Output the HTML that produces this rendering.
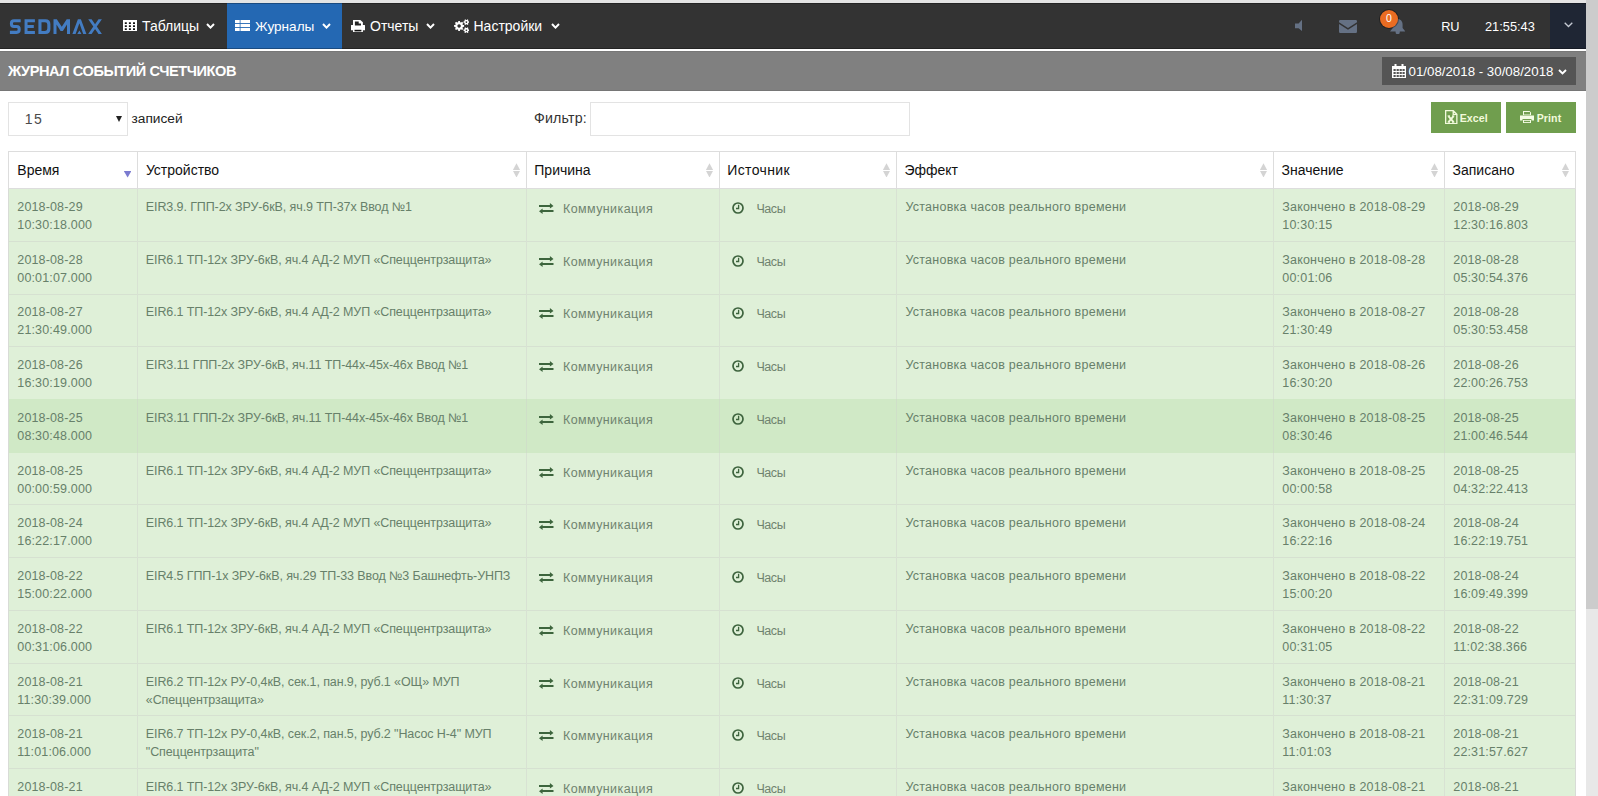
<!DOCTYPE html>
<html><head><meta charset="utf-8">
<style>
*{box-sizing:border-box;margin:0;padding:0}
html,body{width:1598px;height:796px;overflow:hidden;background:#fff;font-family:"Liberation Sans",sans-serif}
#top{position:absolute;left:0;top:0;width:1586px;height:3px;background:#e4e4e4}
#nav{position:absolute;left:0;top:3px;width:1586px;height:46px;background:#333;color:#fff}
.shl{position:absolute;left:0;width:1586px;height:1px;background:rgba(0,0,0,0.28)}
#nav .nt{position:absolute;top:0;height:46px;font-size:14px;line-height:47.6px;white-space:nowrap}
.ni{position:absolute}
#nav .act{background:#2468b3}
.chev{position:absolute;width:6px;height:6px;border-right:1.6px solid #fff;border-bottom:1.6px solid #fff;transform:rotate(45deg)}
#wline{position:absolute;left:0;top:49px;width:1586px;height:2px;background:#fff}
#hdr{position:absolute;left:0;top:51px;width:1586px;height:40px;background:#808080;box-shadow:inset 0 1px 0 #777,inset 0 -1px 0 #767676}
#hdr .ttl{position:absolute;left:8px;top:0;line-height:40px;font-size:14.6px;letter-spacing:-0.45px;font-weight:bold;color:#fff;white-space:nowrap}
#date{position:absolute;overflow:hidden;left:1382px;top:6px;width:194px;height:27.7px;background:#555;color:#fff;font-size:13.3px;line-height:29px;white-space:nowrap}
#sb{position:absolute;left:1586px;top:0;width:12px;height:796px;background:#e8e8e8}
#sbt{position:absolute;left:1586px;top:0;width:12px;height:608.7px;background:#cccccc}
#sel{position:absolute;left:8px;top:102.3px;width:120px;height:33.4px;border:1px solid #e3e3e3;background:#fff}
#sel .v{position:absolute;left:15.8px;top:1px;line-height:31.4px;font-size:14px;color:#4a4a4a;letter-spacing:1.3px}
#sel .ar{position:absolute;left:106.6px;top:13px;width:0;height:0;border-left:3px solid transparent;border-right:3px solid transparent;border-top:6px solid #222}
.lbl{position:absolute;font-size:13.7px;color:#444;white-space:nowrap}
#flt{position:absolute;left:590px;top:102px;width:320px;height:33.5px;border:1px solid #e3e3e3;background:#fff}
.btn{position:absolute;top:102.2px;height:30.6px;width:69.7px;background:#709e4e;color:#f2fadc;font-size:10.6px;font-weight:bold;letter-spacing:0.1px;line-height:32px;white-space:nowrap}
.bg{position:absolute}
.rw{background:#dff0d8}
.hv{background:#d0e9c6}
.ht{position:absolute;top:152px;line-height:37px;font-size:14px;color:#111;white-space:nowrap}
.sd{position:absolute;top:171px;width:7.6px;height:6.6px;background:#7b7bd0;clip-path:polygon(0 0,100% 0,50% 100%)}
.su{position:absolute;top:163.2px;width:7.2px;height:6.7px;background:#d4d4d4;clip-path:polygon(50% 0,100% 100%,0 100%)}
.sn{position:absolute;top:170.7px;width:7.2px;height:6.7px;background:#d4d4d4;clip-path:polygon(0 0,100% 0,50% 100%)}
.tx{position:absolute;font-size:12.5px;line-height:18px;color:#67806a;white-space:nowrap}
.t2{color:#6f836f;letter-spacing:0.4px}
.t3{color:#6f836f;letter-spacing:-0.4px}
.ic{position:absolute}
.ln{position:absolute;width:1px;height:1px}
.hl{background:#dddddd}
.hv1{background:#dddddd;width:1px}
.rl{background:#d6e1d1}
.vl{background:#d8e2d3}
.vl.vh{background:#cfdfc8}
.vl0{background:#d8dcd6}

</style></head><body>
<div id="top"></div>
<div id="nav">
  <svg class="ni" style="left:0;top:0" width="110" height="45" viewBox="0 3 110 45"><g fill="none" stroke="#437cc2"><path stroke-width="3.1" d="M20.7 20.75H14Q11.45 20.75 11.45 23.2V24Q11.45 26.5 14 26.5H16.6Q19.15 26.5 19.15 29V29.85Q19.15 32.35 16.6 32.35H9.9"/><path stroke-width="3" stroke-linejoin="miter" d="M34.9 20.7H26.05V32.4H34.9M26.05 26.5H33.8"/></g><g fill="#437cc2" fill-rule="evenodd"><path d="M38.4 19.2H45.4Q50.4 19.2 50.4 24.2V28.9Q50.4 33.9 45.4 33.9H38.4Z M41.5 22.2H45Q47.3 22.2 47.3 24.5V28.6Q47.3 30.9 45 30.9H41.5Z"/><path d="M53.5 33.9V19.2H56.8L61.75 26.8 66.7 19.2H70V33.9H67V24.6L62.9 30.9H60.6L56.5 24.6V33.9Z"/><path d="M72.4 33.9L77.9 19.2H80.9L86.4 33.9H83.2L79.4 23.2 75.6 33.9Z M77.3 33.9L79.4 30.4 81.5 33.9Z"/><path d="M88.2 19.2H91.6L95.05 24.2 98.5 19.2H101.9L96.8 26.55 101.9 33.9H98.5L95.05 28.9 91.6 33.9H88.2L93.3 26.55Z"/></g></svg>
  <svg class="ni" style="left:123.1px;top:16.9px" width="14" height="11.1" viewBox="0 0 14 11.1"><rect width="14" height="11.1" fill="#fff"/><g fill="#111"><rect x="1.8" y="2.3" width="2" height="1.7"/><rect x="5.9" y="2.3" width="2" height="1.7"/><rect x="10" y="2.3" width="2" height="1.7"/><rect x="1.8" y="5.3" width="2" height="1.7"/><rect x="5.9" y="5.3" width="2" height="1.7"/><rect x="10" y="5.3" width="2" height="1.7"/><rect x="1.8" y="8.3" width="2" height="1.7"/><rect x="5.9" y="8.3" width="2" height="1.7"/><rect x="10" y="8.3" width="2" height="1.7"/></g></svg>
  <span class="nt" style="left:142px">Таблицы</span>
  <svg class="ni" style="left:206.3px;top:20.3px" width="9" height="6" viewBox="0 0 9 6"><polyline points="1,1 4.5,4.6 8,1" fill="none" stroke="#fff" stroke-width="2"/></svg>
  <div class="act" style="position:absolute;left:227px;top:0;width:115px;height:46px"></div>
  <svg class="ni" style="left:235px;top:16.9px" width="15" height="11.1" viewBox="0 0 15 11.1"><g fill="#fff"><rect x="0" y="0" width="4.7" height="3.1"/><rect x="5.5" y="0" width="9.5" height="3.1"/><rect x="0" y="4" width="4.7" height="3.1"/><rect x="5.5" y="4" width="9.5" height="3.1"/><rect x="0" y="8" width="4.7" height="3.1"/><rect x="5.5" y="8" width="9.5" height="3.1"/></g></svg>
  <span class="nt" style="left:255px;font-size:13.6px">Журналы</span>
  <svg class="ni" style="left:322px;top:20.3px" width="9" height="6" viewBox="0 0 9 6"><polyline points="1,1 4.5,4.6 8,1" fill="none" stroke="#fff" stroke-width="2"/></svg>
  <svg class="ni" style="left:351px;top:16.9px" width="14" height="12.1" viewBox="0 0 14 12.1"><path d="M2 .3Q2 0 2.3 0H9.3L11.9 2.2V5.6H2z M0 5.3Q0 5 .5 5H13.5Q14 5 14 5.3V10.2H11.9V8.7H2V10.2H0z M2 8.7H11.9V12.1H2z" fill="#fff"/><path d="M3.9 1.5H7.7V3.4H10V5.4H3.9z" fill="#222"/><rect x="3.5" y="9.8" width="6.9" height="1.6" fill="#111"/></svg>
  <span class="nt" style="left:370px">Отчеты</span>
  <svg class="ni" style="left:425.8px;top:20.3px" width="9" height="6" viewBox="0 0 9 6"><polyline points="1,1 4.5,4.6 8,1" fill="none" stroke="#fff" stroke-width="2"/></svg>
  <svg class="ni" style="left:453.9px;top:15.9px" width="15.4" height="14.3" viewBox="0 0 15.4 14.3"><path fill="#fff" fill-rule="evenodd" d="M8.87 5.95 L10.13 6.11 L10.13 7.79 L8.87 7.95 L8.47 8.91 L9.25 9.92 L8.07 11.10 L7.06 10.32 L6.10 10.72 L5.94 11.98 L4.26 11.98 L4.10 10.72 L3.14 10.32 L2.13 11.10 L0.95 9.92 L1.73 8.91 L1.33 7.95 L0.07 7.79 L0.07 6.11 L1.33 5.95 L1.73 4.99 L0.95 3.98 L2.13 2.80 L3.14 3.58 L4.10 3.18 L4.26 1.92 L5.94 1.92 L6.10 3.18 L7.06 3.58 L8.07 2.80 L9.25 3.98 L8.47 4.99Z M5.1 5.2a1.75 1.75 0 1 0 0.01 0z"/><path fill="#fff" fill-rule="evenodd" d="M14.47 2.35 L15.33 2.45 L15.33 3.75 L14.47 3.85 L14.08 4.52 L14.43 5.31 L13.30 5.96 L12.79 5.27 L12.01 5.27 L11.50 5.96 L10.37 5.31 L10.72 4.52 L10.33 3.85 L9.47 3.75 L9.47 2.45 L10.33 2.35 L10.72 1.68 L10.37 0.89 L11.50 0.24 L12.01 0.93 L12.79 0.93 L13.30 0.24 L14.43 0.89 L14.08 1.68Z M12.4 2.3a.8 .8 0 1 0 .01 0z"/><path fill="#fff" fill-rule="evenodd" d="M14.47 10.45 L15.33 10.55 L15.33 11.85 L14.47 11.95 L14.08 12.62 L14.43 13.41 L13.30 14.06 L12.79 13.37 L12.01 13.37 L11.50 14.06 L10.37 13.41 L10.72 12.62 L10.33 11.95 L9.47 11.85 L9.47 10.55 L10.33 10.45 L10.72 9.78 L10.37 8.99 L11.50 8.34 L12.01 9.03 L12.79 9.03 L13.30 8.34 L14.43 8.99 L14.08 9.78Z M12.4 10.4a.8 .8 0 1 0 .01 0z"/></svg>
  <span class="nt" style="left:473.5px">Настройки</span>
  <svg class="ni" style="left:550.8px;top:20.3px" width="9" height="6" viewBox="0 0 9 6"><polyline points="1,1 4.5,4.6 8,1" fill="none" stroke="#fff" stroke-width="2"/></svg>
  <!-- right side -->
  <svg class="ni" style="left:1294.8px;top:15.6px" width="7.6" height="12.4" viewBox="0 0 7.6 12.4"><path d="M0 4.4H3.6L7.6 0V12.4L3.6 9.2H0z" fill="#657184"/></svg>
  <svg class="ni" style="left:1339px;top:16.9px" width="18" height="12.9" viewBox="0 0 18 12.9"><path d="M0 1.2A1.2 1.2 0 0 1 1.2 0h15.6A1.2 1.2 0 0 1 18 1.2v1L9 7.9 0 2.2z M0 4.1l9 5.7 9-5.7V11.7A1.2 1.2 0 0 1 16.8 12.9H1.2A1.2 1.2 0 0 1 0 11.7z" fill="#657184"/></svg>
  <svg class="ni" style="left:1389.8px;top:15.5px" width="15.4" height="15.2" viewBox="0 0 15.4 15.2"><path d="M7.7 0C10.6 0 12.6 2.4 12.6 5.5V8.9L15.4 12.6H0L2.8 8.9V5.5C2.8 2.4 4.8 0 7.7 0z M5.6 12.6H9.8V13.2A2.1 2 0 0 1 5.6 13.2z" fill="#657184"/></svg>
  <div style="position:absolute;left:1379.8px;top:6.6px;width:18.4px;height:18.4px;border-radius:50%;background:#ea6c22;box-shadow:0 0 0 1px rgba(0,0,0,0.35);color:#fff;font-size:10.5px;line-height:17.5px;text-align:center">0</div>
  <span class="nt" style="left:1441.3px;font-size:12.8px;letter-spacing:-0.4px">RU</span>
  <span class="nt" style="left:1485px;font-size:12.8px">21:55:43</span>
  <div style="position:absolute;left:1550px;top:0;width:36px;height:46px;background:#1f2634"></div>
  <div class="shl" style="top:0"></div><div class="shl" style="top:45px"></div>
  <svg class="ni" style="left:1563.6px;top:19.3px" width="9" height="5.5" viewBox="0 0 9 5.5"><polyline points="0.7,0.7 4.5,4.5 8.3,0.7" fill="none" stroke="#c4c9d2" stroke-width="1.3"/></svg>
</div>
<div id="wline"></div>
<div id="hdr">
  <div class="ttl">ЖУРНАЛ СОБЫТИЙ СЧЕТЧИКОВ</div>
  <div id="date">
    <svg style="position:absolute;left:10px;top:7px" width="14" height="14" viewBox="0 0 14 14"><path d="M0 2h14v12H0z" fill="#fff"/><g fill="#555"><rect x="1.5" y="5" width="2.2" height="2"/><rect x="4.6" y="5" width="2.2" height="2"/><rect x="7.6" y="5" width="2.2" height="2"/><rect x="10.5" y="5" width="2.2" height="2"/><rect x="1.5" y="8" width="2.2" height="2"/><rect x="4.6" y="8" width="2.2" height="2"/><rect x="7.6" y="8" width="2.2" height="2"/><rect x="10.5" y="8" width="2.2" height="2"/><rect x="1.5" y="11" width="2.2" height="2"/><rect x="4.6" y="11" width="2.2" height="2"/><rect x="7.6" y="11" width="2.2" height="2"/><rect x="10.5" y="11" width="2.2" height="2"/></g><rect x="2.5" y="0" width="2" height="3.5" fill="#fff"/><rect x="9.5" y="0" width="2" height="3.5" fill="#fff"/></svg>
    <span style="position:absolute;left:26.5px">01/08/2018 - 30/08/2018</span>
    <svg class="ni" style="left:175.5px;top:12px" width="9" height="6" viewBox="0 0 9 6"><polyline points="1,1 4.5,4.5 8,1" fill="none" stroke="#fff" stroke-width="1.9"/></svg>
  </div>
</div>
<div id="sb"></div><div id="sbt"></div>

<div id="sel"><span class="v">15</span><i class="ar"></i></div>
<div class="lbl" style="left:131.5px;top:111px;color:#222">записей</div>
<div class="lbl" style="left:534px;top:110px;font-size:14.2px;letter-spacing:0.2px;color:#333">Фильтр:</div>
<div id="flt"></div>
<div class="btn" style="left:1431.2px">
  <svg style="position:absolute;left:13.4px;top:7.8px" width="13" height="14.5" viewBox="0 0 13 14.5"><path d="M.65 .65H8.2L11.85 4.3V13.55H.65Z M8.2 .65V4.3H11.85" fill="none" stroke="#f2fadc" stroke-width="1.3" stroke-linejoin="miter"/><path d="M3.4 6.1L8.6 12.1M8.6 6.1L3.4 12.1" stroke="#f2fadc" stroke-width="1.9"/><path d="M2.6 5.9H5M7 5.9H9.4M2.6 12.2H5M7 12.2H9.4" stroke="#f2fadc" stroke-width="1"/></svg>
  <span style="position:absolute;left:28.5px">Excel</span>
</div>
<div class="btn" style="left:1506.2px">
  <svg style="position:absolute;left:14px;top:9px" width="14" height="12" viewBox="0 0 14 12"><path d="M3 0h6.5L11 1.5V4H3z M0 4.5h14V9.5h-2.5V8h-9v1.5H0z M3 9h8v3H3z" fill="#f4fbe4"/><rect x="4" y="1" width="6" height="2.5" fill="#74a052"/><rect x="4" y="9.8" width="6" height="1.3" fill="#74a052"/></svg>
  <span style="position:absolute;left:30.5px">Print</span>
</div>

<div class="bg" style="left:8px;top:151px;width:1568px;height:38px;background:#fff"></div>
<span class="ht" style="left:17.3px">Время</span>
<i class="sd" style="left:123.8px"></i>
<span class="ht" style="left:145.9px">Устройство</span>
<i class="su" style="left:512.9px"></i><i class="sn" style="left:512.9px"></i>
<span class="ht" style="left:534.3px">Причина</span>
<i class="su" style="left:705.9px"></i><i class="sn" style="left:705.9px"></i>
<span class="ht" style="left:727.3px;letter-spacing:0.35px">Источник</span>
<i class="su" style="left:882.9px"></i><i class="sn" style="left:882.9px"></i>
<span class="ht" style="left:904.4px">Эффект</span>
<i class="su" style="left:1259.9px"></i><i class="sn" style="left:1259.9px"></i>
<span class="ht" style="left:1281.5px">Значение</span>
<i class="su" style="left:1430.9px"></i><i class="sn" style="left:1430.9px"></i>
<span class="ht" style="left:1452.5px">Записано</span>
<i class="su" style="left:1561.9px"></i><i class="sn" style="left:1561.9px"></i>
<div class="bg rw" style="left:9px;top:189px;width:1566px;height:52px"></div>
<div class="tx" style="left:17.3px;top:198px;letter-spacing:0.15px">2018-08-29<br>10:30:18.000</div>
<div class="tx" style="left:145.8px;top:198px;letter-spacing:-0.1px">EIR3.9. ГПП-2х ЗРУ-6кВ, яч.9 ТП-37х Ввод №1</div>
<div class="tx" style="left:905.4px;top:198px;letter-spacing:0.25px">Установка часов реального времени</div>
<div class="tx" style="left:1282.3px;top:198px;letter-spacing:0.19px">Закончено в 2018-08-29<br>10:30:15</div>
<div class="tx" style="left:1453.3px;top:198px;letter-spacing:0.15px">2018-08-29<br>12:30:16.803</div>
<svg class="ic" style="left:539px;top:203.1px" width="14.5" height="11" viewBox="0 0 14.5 11"><path d="M0 2.1h10.9V0L14.5 2.9 10.9 5.6V4H0z M14.5 7.1H3.6V5.4L0 8.2 3.6 11V9H14.5z" fill="#3d653d"/></svg>
<div class="tx t2" style="left:563px;top:200px">Коммуникация</div>
<svg class="ic" style="left:731.8px;top:202px" width="12" height="12" viewBox="0 0 12 12"><circle cx="6" cy="6" r="5" fill="none" stroke="#3d633d" stroke-width="1.7"/><path d="M6.6 2.8v3.7H4" fill="none" stroke="#3d633d" stroke-width="1.3"/></svg>
<div class="tx t3" style="left:756.4px;top:200px">Часы</div>
<div class="bg rw" style="left:9px;top:242px;width:1566px;height:52px"></div>
<div class="tx" style="left:17.3px;top:251px;letter-spacing:0.15px">2018-08-28<br>00:01:07.000</div>
<div class="tx" style="left:145.8px;top:251px;letter-spacing:-0.1px">EIR6.1 ТП-12х ЗРУ-6кВ, яч.4 АД-2 МУП «Спеццентрзащита»</div>
<div class="tx" style="left:905.4px;top:251px;letter-spacing:0.25px">Установка часов реального времени</div>
<div class="tx" style="left:1282.3px;top:251px;letter-spacing:0.19px">Закончено в 2018-08-28<br>00:01:06</div>
<div class="tx" style="left:1453.3px;top:251px;letter-spacing:0.15px">2018-08-28<br>05:30:54.376</div>
<svg class="ic" style="left:539px;top:256.1px" width="14.5" height="11" viewBox="0 0 14.5 11"><path d="M0 2.1h10.9V0L14.5 2.9 10.9 5.6V4H0z M14.5 7.1H3.6V5.4L0 8.2 3.6 11V9H14.5z" fill="#3d653d"/></svg>
<div class="tx t2" style="left:563px;top:253px">Коммуникация</div>
<svg class="ic" style="left:731.8px;top:255px" width="12" height="12" viewBox="0 0 12 12"><circle cx="6" cy="6" r="5" fill="none" stroke="#3d633d" stroke-width="1.7"/><path d="M6.6 2.8v3.7H4" fill="none" stroke="#3d633d" stroke-width="1.3"/></svg>
<div class="tx t3" style="left:756.4px;top:253px">Часы</div>
<div class="bg rw" style="left:9px;top:295px;width:1566px;height:51px"></div>
<div class="tx" style="left:17.3px;top:303px;letter-spacing:0.15px">2018-08-27<br>21:30:49.000</div>
<div class="tx" style="left:145.8px;top:303px;letter-spacing:-0.1px">EIR6.1 ТП-12х ЗРУ-6кВ, яч.4 АД-2 МУП «Спеццентрзащита»</div>
<div class="tx" style="left:905.4px;top:303px;letter-spacing:0.25px">Установка часов реального времени</div>
<div class="tx" style="left:1282.3px;top:303px;letter-spacing:0.19px">Закончено в 2018-08-27<br>21:30:49</div>
<div class="tx" style="left:1453.3px;top:303px;letter-spacing:0.15px">2018-08-28<br>05:30:53.458</div>
<svg class="ic" style="left:539px;top:308.1px" width="14.5" height="11" viewBox="0 0 14.5 11"><path d="M0 2.1h10.9V0L14.5 2.9 10.9 5.6V4H0z M14.5 7.1H3.6V5.4L0 8.2 3.6 11V9H14.5z" fill="#3d653d"/></svg>
<div class="tx t2" style="left:563px;top:305px">Коммуникация</div>
<svg class="ic" style="left:731.8px;top:307px" width="12" height="12" viewBox="0 0 12 12"><circle cx="6" cy="6" r="5" fill="none" stroke="#3d633d" stroke-width="1.7"/><path d="M6.6 2.8v3.7H4" fill="none" stroke="#3d633d" stroke-width="1.3"/></svg>
<div class="tx t3" style="left:756.4px;top:305px">Часы</div>
<div class="bg rw" style="left:9px;top:347px;width:1566px;height:52px"></div>
<div class="tx" style="left:17.3px;top:356px;letter-spacing:0.15px">2018-08-26<br>16:30:19.000</div>
<div class="tx" style="left:145.8px;top:356px;letter-spacing:-0.1px">EIR3.11 ГПП-2х ЗРУ-6кВ, яч.11 ТП-44х-45х-46х Ввод №1</div>
<div class="tx" style="left:905.4px;top:356px;letter-spacing:0.25px">Установка часов реального времени</div>
<div class="tx" style="left:1282.3px;top:356px;letter-spacing:0.19px">Закончено в 2018-08-26<br>16:30:20</div>
<div class="tx" style="left:1453.3px;top:356px;letter-spacing:0.15px">2018-08-26<br>22:00:26.753</div>
<svg class="ic" style="left:539px;top:361.1px" width="14.5" height="11" viewBox="0 0 14.5 11"><path d="M0 2.1h10.9V0L14.5 2.9 10.9 5.6V4H0z M14.5 7.1H3.6V5.4L0 8.2 3.6 11V9H14.5z" fill="#3d653d"/></svg>
<div class="tx t2" style="left:563px;top:358px">Коммуникация</div>
<svg class="ic" style="left:731.8px;top:360px" width="12" height="12" viewBox="0 0 12 12"><circle cx="6" cy="6" r="5" fill="none" stroke="#3d633d" stroke-width="1.7"/><path d="M6.6 2.8v3.7H4" fill="none" stroke="#3d633d" stroke-width="1.3"/></svg>
<div class="tx t3" style="left:756.4px;top:358px">Часы</div>
<div class="bg hv" style="left:9px;top:399px;width:1566px;height:54px"></div>
<div class="tx" style="left:17.3px;top:409px;letter-spacing:0.15px">2018-08-25<br>08:30:48.000</div>
<div class="tx" style="left:145.8px;top:409px;letter-spacing:-0.1px">EIR3.11 ГПП-2х ЗРУ-6кВ, яч.11 ТП-44х-45х-46х Ввод №1</div>
<div class="tx" style="left:905.4px;top:409px;letter-spacing:0.25px">Установка часов реального времени</div>
<div class="tx" style="left:1282.3px;top:409px;letter-spacing:0.19px">Закончено в 2018-08-25<br>08:30:46</div>
<div class="tx" style="left:1453.3px;top:409px;letter-spacing:0.15px">2018-08-25<br>21:00:46.544</div>
<svg class="ic" style="left:539px;top:414.1px" width="14.5" height="11" viewBox="0 0 14.5 11"><path d="M0 2.1h10.9V0L14.5 2.9 10.9 5.6V4H0z M14.5 7.1H3.6V5.4L0 8.2 3.6 11V9H14.5z" fill="#3d653d"/></svg>
<div class="tx t2" style="left:563px;top:411px">Коммуникация</div>
<svg class="ic" style="left:731.8px;top:413px" width="12" height="12" viewBox="0 0 12 12"><circle cx="6" cy="6" r="5" fill="none" stroke="#3d633d" stroke-width="1.7"/><path d="M6.6 2.8v3.7H4" fill="none" stroke="#3d633d" stroke-width="1.3"/></svg>
<div class="tx t3" style="left:756.4px;top:411px">Часы</div>
<div class="bg rw" style="left:9px;top:453px;width:1566px;height:51px"></div>
<div class="tx" style="left:17.3px;top:462px;letter-spacing:0.15px">2018-08-25<br>00:00:59.000</div>
<div class="tx" style="left:145.8px;top:462px;letter-spacing:-0.1px">EIR6.1 ТП-12х ЗРУ-6кВ, яч.4 АД-2 МУП «Спеццентрзащита»</div>
<div class="tx" style="left:905.4px;top:462px;letter-spacing:0.25px">Установка часов реального времени</div>
<div class="tx" style="left:1282.3px;top:462px;letter-spacing:0.19px">Закончено в 2018-08-25<br>00:00:58</div>
<div class="tx" style="left:1453.3px;top:462px;letter-spacing:0.15px">2018-08-25<br>04:32:22.413</div>
<svg class="ic" style="left:539px;top:467.1px" width="14.5" height="11" viewBox="0 0 14.5 11"><path d="M0 2.1h10.9V0L14.5 2.9 10.9 5.6V4H0z M14.5 7.1H3.6V5.4L0 8.2 3.6 11V9H14.5z" fill="#3d653d"/></svg>
<div class="tx t2" style="left:563px;top:464px">Коммуникация</div>
<svg class="ic" style="left:731.8px;top:466px" width="12" height="12" viewBox="0 0 12 12"><circle cx="6" cy="6" r="5" fill="none" stroke="#3d633d" stroke-width="1.7"/><path d="M6.6 2.8v3.7H4" fill="none" stroke="#3d633d" stroke-width="1.3"/></svg>
<div class="tx t3" style="left:756.4px;top:464px">Часы</div>
<div class="bg rw" style="left:9px;top:505px;width:1566px;height:52px"></div>
<div class="tx" style="left:17.3px;top:514px;letter-spacing:0.15px">2018-08-24<br>16:22:17.000</div>
<div class="tx" style="left:145.8px;top:514px;letter-spacing:-0.1px">EIR6.1 ТП-12х ЗРУ-6кВ, яч.4 АД-2 МУП «Спеццентрзащита»</div>
<div class="tx" style="left:905.4px;top:514px;letter-spacing:0.25px">Установка часов реального времени</div>
<div class="tx" style="left:1282.3px;top:514px;letter-spacing:0.19px">Закончено в 2018-08-24<br>16:22:16</div>
<div class="tx" style="left:1453.3px;top:514px;letter-spacing:0.15px">2018-08-24<br>16:22:19.751</div>
<svg class="ic" style="left:539px;top:519.1px" width="14.5" height="11" viewBox="0 0 14.5 11"><path d="M0 2.1h10.9V0L14.5 2.9 10.9 5.6V4H0z M14.5 7.1H3.6V5.4L0 8.2 3.6 11V9H14.5z" fill="#3d653d"/></svg>
<div class="tx t2" style="left:563px;top:516px">Коммуникация</div>
<svg class="ic" style="left:731.8px;top:518px" width="12" height="12" viewBox="0 0 12 12"><circle cx="6" cy="6" r="5" fill="none" stroke="#3d633d" stroke-width="1.7"/><path d="M6.6 2.8v3.7H4" fill="none" stroke="#3d633d" stroke-width="1.3"/></svg>
<div class="tx t3" style="left:756.4px;top:516px">Часы</div>
<div class="bg rw" style="left:9px;top:558px;width:1566px;height:52px"></div>
<div class="tx" style="left:17.3px;top:567px;letter-spacing:0.15px">2018-08-22<br>15:00:22.000</div>
<div class="tx" style="left:145.8px;top:567px;letter-spacing:-0.1px">EIR4.5 ГПП-1х ЗРУ-6кВ, яч.29 ТП-33 Ввод №3 Башнефть-УНПЗ</div>
<div class="tx" style="left:905.4px;top:567px;letter-spacing:0.25px">Установка часов реального времени</div>
<div class="tx" style="left:1282.3px;top:567px;letter-spacing:0.19px">Закончено в 2018-08-22<br>15:00:20</div>
<div class="tx" style="left:1453.3px;top:567px;letter-spacing:0.15px">2018-08-24<br>16:09:49.399</div>
<svg class="ic" style="left:539px;top:572.1px" width="14.5" height="11" viewBox="0 0 14.5 11"><path d="M0 2.1h10.9V0L14.5 2.9 10.9 5.6V4H0z M14.5 7.1H3.6V5.4L0 8.2 3.6 11V9H14.5z" fill="#3d653d"/></svg>
<div class="tx t2" style="left:563px;top:569px">Коммуникация</div>
<svg class="ic" style="left:731.8px;top:571px" width="12" height="12" viewBox="0 0 12 12"><circle cx="6" cy="6" r="5" fill="none" stroke="#3d633d" stroke-width="1.7"/><path d="M6.6 2.8v3.7H4" fill="none" stroke="#3d633d" stroke-width="1.3"/></svg>
<div class="tx t3" style="left:756.4px;top:569px">Часы</div>
<div class="bg rw" style="left:9px;top:611px;width:1566px;height:52px"></div>
<div class="tx" style="left:17.3px;top:620px;letter-spacing:0.15px">2018-08-22<br>00:31:06.000</div>
<div class="tx" style="left:145.8px;top:620px;letter-spacing:-0.1px">EIR6.1 ТП-12х ЗРУ-6кВ, яч.4 АД-2 МУП «Спеццентрзащита»</div>
<div class="tx" style="left:905.4px;top:620px;letter-spacing:0.25px">Установка часов реального времени</div>
<div class="tx" style="left:1282.3px;top:620px;letter-spacing:0.19px">Закончено в 2018-08-22<br>00:31:05</div>
<div class="tx" style="left:1453.3px;top:620px;letter-spacing:0.15px">2018-08-22<br>11:02:38.366</div>
<svg class="ic" style="left:539px;top:625.1px" width="14.5" height="11" viewBox="0 0 14.5 11"><path d="M0 2.1h10.9V0L14.5 2.9 10.9 5.6V4H0z M14.5 7.1H3.6V5.4L0 8.2 3.6 11V9H14.5z" fill="#3d653d"/></svg>
<div class="tx t2" style="left:563px;top:622px">Коммуникация</div>
<svg class="ic" style="left:731.8px;top:624px" width="12" height="12" viewBox="0 0 12 12"><circle cx="6" cy="6" r="5" fill="none" stroke="#3d633d" stroke-width="1.7"/><path d="M6.6 2.8v3.7H4" fill="none" stroke="#3d633d" stroke-width="1.3"/></svg>
<div class="tx t3" style="left:756.4px;top:622px">Часы</div>
<div class="bg rw" style="left:9px;top:664px;width:1566px;height:51px"></div>
<div class="tx" style="left:17.3px;top:673px;letter-spacing:0.15px">2018-08-21<br>11:30:39.000</div>
<div class="tx" style="left:145.8px;top:673px;letter-spacing:-0.1px">EIR6.2 ТП-12х РУ-0,4кВ, сек.1, пан.9, руб.1 «ОЩ» МУП<br>«Спеццентрзащита»</div>
<div class="tx" style="left:905.4px;top:673px;letter-spacing:0.25px">Установка часов реального времени</div>
<div class="tx" style="left:1282.3px;top:673px;letter-spacing:0.19px">Закончено в 2018-08-21<br>11:30:37</div>
<div class="tx" style="left:1453.3px;top:673px;letter-spacing:0.15px">2018-08-21<br>22:31:09.729</div>
<svg class="ic" style="left:539px;top:678.1px" width="14.5" height="11" viewBox="0 0 14.5 11"><path d="M0 2.1h10.9V0L14.5 2.9 10.9 5.6V4H0z M14.5 7.1H3.6V5.4L0 8.2 3.6 11V9H14.5z" fill="#3d653d"/></svg>
<div class="tx t2" style="left:563px;top:675px">Коммуникация</div>
<svg class="ic" style="left:731.8px;top:677px" width="12" height="12" viewBox="0 0 12 12"><circle cx="6" cy="6" r="5" fill="none" stroke="#3d633d" stroke-width="1.7"/><path d="M6.6 2.8v3.7H4" fill="none" stroke="#3d633d" stroke-width="1.3"/></svg>
<div class="tx t3" style="left:756.4px;top:675px">Часы</div>
<div class="bg rw" style="left:9px;top:716px;width:1566px;height:52px"></div>
<div class="tx" style="left:17.3px;top:725px;letter-spacing:0.15px">2018-08-21<br>11:01:06.000</div>
<div class="tx" style="left:145.8px;top:725px;letter-spacing:-0.1px">EIR6.7 ТП-12х РУ-0,4кВ, сек.2, пан.5, руб.2 "Насос Н-4" МУП<br>"Спеццентрзащита"</div>
<div class="tx" style="left:905.4px;top:725px;letter-spacing:0.25px">Установка часов реального времени</div>
<div class="tx" style="left:1282.3px;top:725px;letter-spacing:0.19px">Закончено в 2018-08-21<br>11:01:03</div>
<div class="tx" style="left:1453.3px;top:725px;letter-spacing:0.15px">2018-08-21<br>22:31:57.627</div>
<svg class="ic" style="left:539px;top:730.1px" width="14.5" height="11" viewBox="0 0 14.5 11"><path d="M0 2.1h10.9V0L14.5 2.9 10.9 5.6V4H0z M14.5 7.1H3.6V5.4L0 8.2 3.6 11V9H14.5z" fill="#3d653d"/></svg>
<div class="tx t2" style="left:563px;top:727px">Коммуникация</div>
<svg class="ic" style="left:731.8px;top:729px" width="12" height="12" viewBox="0 0 12 12"><circle cx="6" cy="6" r="5" fill="none" stroke="#3d633d" stroke-width="1.7"/><path d="M6.6 2.8v3.7H4" fill="none" stroke="#3d633d" stroke-width="1.3"/></svg>
<div class="tx t3" style="left:756.4px;top:727px">Часы</div>
<div class="bg rw" style="left:9px;top:769px;width:1566px;height:52px"></div>
<div class="tx" style="left:17.3px;top:778px;letter-spacing:0.15px">2018-08-21<br>10:31:06.000</div>
<div class="tx" style="left:145.8px;top:778px;letter-spacing:-0.1px">EIR6.1 ТП-12х ЗРУ-6кВ, яч.4 АД-2 МУП «Спеццентрзащита»</div>
<div class="tx" style="left:905.4px;top:778px;letter-spacing:0.25px">Установка часов реального времени</div>
<div class="tx" style="left:1282.3px;top:778px;letter-spacing:0.19px">Закончено в 2018-08-21<br>10:31:05</div>
<div class="tx" style="left:1453.3px;top:778px;letter-spacing:0.15px">2018-08-21<br>22:31:58.100</div>
<svg class="ic" style="left:539px;top:783.1px" width="14.5" height="11" viewBox="0 0 14.5 11"><path d="M0 2.1h10.9V0L14.5 2.9 10.9 5.6V4H0z M14.5 7.1H3.6V5.4L0 8.2 3.6 11V9H14.5z" fill="#3d653d"/></svg>
<div class="tx t2" style="left:563px;top:780px">Коммуникация</div>
<svg class="ic" style="left:731.8px;top:782px" width="12" height="12" viewBox="0 0 12 12"><circle cx="6" cy="6" r="5" fill="none" stroke="#3d633d" stroke-width="1.7"/><path d="M6.6 2.8v3.7H4" fill="none" stroke="#3d633d" stroke-width="1.3"/></svg>
<div class="tx t3" style="left:756.4px;top:780px">Часы</div>
<div class="ln hl" style="left:8px;top:151px;width:1568px"></div>
<div class="ln hl" style="left:8px;top:188px;width:1568px"></div>
<div class="ln rl" style="left:9px;top:241px;width:1566px"></div>
<div class="ln rl" style="left:9px;top:294px;width:1566px"></div>
<div class="ln rl" style="left:9px;top:346px;width:1566px"></div>
<div class="ln rl" style="left:9px;top:504px;width:1566px"></div>
<div class="ln rl" style="left:9px;top:557px;width:1566px"></div>
<div class="ln rl" style="left:9px;top:610px;width:1566px"></div>
<div class="ln rl" style="left:9px;top:663px;width:1566px"></div>
<div class="ln rl" style="left:9px;top:715px;width:1566px"></div>
<div class="ln rl" style="left:9px;top:768px;width:1566px"></div>
<div class="ln rl" style="left:9px;top:821px;width:1566px"></div>
<div class="ln hv1" style="left:8px;top:151px;height:37px"></div>
<div class="ln vl0" style="left:8px;top:189px;height:608px"></div>
<div class="ln hv1" style="left:137px;top:151px;height:37px"></div>
<div class="ln vl" style="left:137px;top:189px;height:210px"></div>
<div class="ln vl vh" style="left:137px;top:399px;height:54px"></div>
<div class="ln vl" style="left:137px;top:453px;height:344px"></div>
<div class="ln hv1" style="left:526px;top:151px;height:37px"></div>
<div class="ln vl" style="left:526px;top:189px;height:210px"></div>
<div class="ln vl vh" style="left:526px;top:399px;height:54px"></div>
<div class="ln vl" style="left:526px;top:453px;height:344px"></div>
<div class="ln hv1" style="left:719px;top:151px;height:37px"></div>
<div class="ln vl" style="left:719px;top:189px;height:210px"></div>
<div class="ln vl vh" style="left:719px;top:399px;height:54px"></div>
<div class="ln vl" style="left:719px;top:453px;height:344px"></div>
<div class="ln hv1" style="left:896px;top:151px;height:37px"></div>
<div class="ln vl" style="left:896px;top:189px;height:210px"></div>
<div class="ln vl vh" style="left:896px;top:399px;height:54px"></div>
<div class="ln vl" style="left:896px;top:453px;height:344px"></div>
<div class="ln hv1" style="left:1273px;top:151px;height:37px"></div>
<div class="ln vl" style="left:1273px;top:189px;height:210px"></div>
<div class="ln vl vh" style="left:1273px;top:399px;height:54px"></div>
<div class="ln vl" style="left:1273px;top:453px;height:344px"></div>
<div class="ln hv1" style="left:1444px;top:151px;height:37px"></div>
<div class="ln vl" style="left:1444px;top:189px;height:210px"></div>
<div class="ln vl vh" style="left:1444px;top:399px;height:54px"></div>
<div class="ln vl" style="left:1444px;top:453px;height:344px"></div>
<div class="ln hv1" style="left:1575px;top:151px;height:37px"></div>
<div class="ln vl0" style="left:1575px;top:189px;height:608px"></div>
</body></html>
